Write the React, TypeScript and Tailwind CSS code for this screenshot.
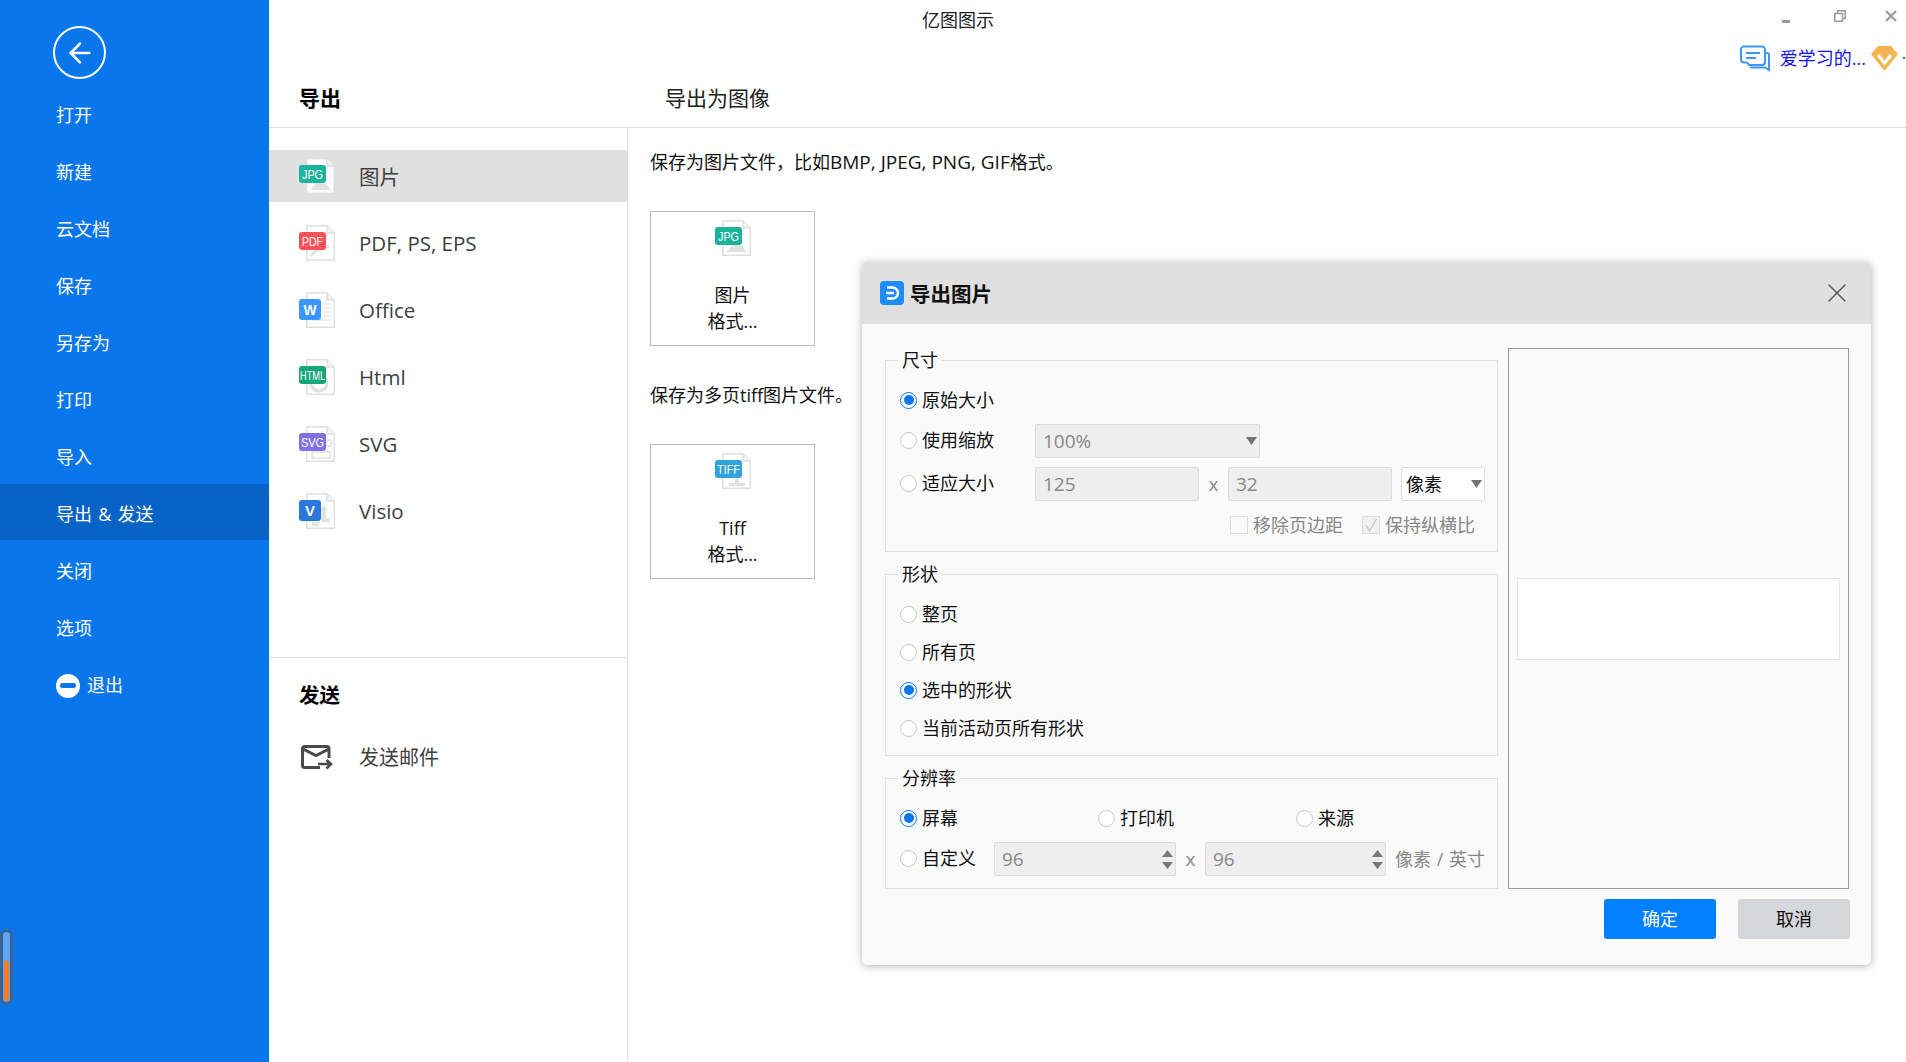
import React from 'react';
import { ArrowLeft, X } from 'lucide-react';

const sideItems = ['打开', '新建', '云文档', '保存', '另存为', '打印', '导入', '导出 & 发送', '关闭', '选项'];

type Kind = 'jpg' | 'pdf' | 'word' | 'html' | 'svg' | 'visio' | 'tiff';

const badges: Record<Kind, { label: string; color: string; width: number; textWidth: number }> = {
  jpg: { label: 'JPG', color: '#1bb39b', width: 27, textWidth: 21 },
  pdf: { label: 'PDF', color: '#fb525a', width: 27, textWidth: 21 },
  word: { label: 'W', color: '#3b97ff', width: 22, textWidth: 13 },
  html: { label: 'HTML', color: '#17a67a', width: 27, textWidth: 25 },
  svg: { label: 'SVG', color: '#8470e6', width: 27, textWidth: 23 },
  visio: { label: 'V', color: '#2b78dc', width: 22, textWidth: 10 },
  tiff: { label: 'TIFF', color: '#31a3dc', width: 27, textWidth: 23 },
};

function FileIcon({ kind }: { kind: Kind }) {
  const b = badges[kind];
  const tall = kind === 'word' || kind === 'visio';
  return (
    <svg width="36" height="36" viewBox="0 0 36 36" className="shrink-0 overflow-visible">
      <path d="M7.75 0.75H28L35.25 8V35.25H7.75Z" fill="#fff" stroke="#e0e0e0" strokeWidth="1.5" />
      <path d="M28 0.75V8H35.25" fill="#f2f2f2" stroke="#e0e0e0" strokeWidth="1.5" />
      {kind === 'jpg' && <path d="M11 32L22 20L32 32Z" fill="#e2e2e2" />}
      {kind === 'pdf' && <path d="M12 31C16 24 24 24 30 21" fill="none" stroke="#e0e0e0" strokeWidth="3" />}
      {kind === 'word' && <path d="M24 12H32M24 16H32M24 20H32M24 24H32M12 28H32" stroke="#dedede" strokeWidth="1.2" />}
      {kind === 'html' && <circle cx="20" cy="24" r="8" fill="none" stroke="#e0e0e0" strokeWidth="3" />}
      {kind === 'svg' && <path d="M13 26H31V32H13ZM27 14H32V20H27Z" fill="none" stroke="#e0e0e0" strokeWidth="1.4" />}
      {kind === 'visio' && <path d="M25 12L29 17H27V25H31V29H22V17H21ZM13 29H20V33H13Z" fill="#e2e2e2" />}
      {kind === 'tiff' && <path d="M14 30H20V26H24V30H30V33H14Z" fill="#e2e2e2" />}
      <rect x="0" y="7" width={b.width} height={tall ? 21 : 18} rx="3" fill={b.color} />
      <text
        x={b.width / 2}
        y={tall ? 22.5 : 21}
        textAnchor="middle"
        fill="#fff"
        fontSize={tall ? 15 : 13.5}
        fontWeight={tall ? 700 : 400}
        textLength={b.textWidth}
        lengthAdjust="spacingAndGlyphs"
        fontFamily="Liberation Sans, sans-serif"
      >
        {b.label}
      </text>
    </svg>
  );
}

function Radio({ on = false }: { on?: boolean }) {
  return (
    <span
      className={`flex h-[17px] w-[17px] shrink-0 items-center justify-center rounded-full border bg-white ${
        on ? 'border-[#0a76ec]' : 'border-[#c8c8c8]'
      }`}
    >
      {on && <span className="h-[10px] w-[10px] rounded-full bg-[#0a76ec]" />}
    </span>
  );
}

function RadioLabel({ text, on, className = '' }: { text: string; on?: boolean; className?: string }) {
  return (
    <div className={`flex items-center gap-[5px] ${className}`}>
      <Radio on={on} />
      <span className="text-[#111]">{text}</span>
    </div>
  );
}

function Caret() {
  return (
    <svg width="11" height="8" viewBox="0 0 11 8" className="shrink-0">
      <path d="M0 0H11L5.5 8Z" fill="#737373" />
    </svg>
  );
}

function Spin({ value, className }: { value: string; className: string }) {
  return (
    <div className={`flex h-[34px] items-center justify-between rounded-[2px] border border-[#dddddd] bg-[#eeeeee] pl-[7px] pr-[2px] text-[19px] text-[#888] ${className}`}>
      <span>{value}</span>
      <div className="flex flex-col gap-[5px]">
        <svg width="11" height="7" viewBox="0 0 11 7"><path d="M5.5 0L11 7H0Z" fill="#777" /></svg>
        <svg width="11" height="7" viewBox="0 0 11 7"><path d="M0 0H11L5.5 7Z" fill="#777" /></svg>
      </div>
    </div>
  );
}

function Group({ title, className, children }: { title: string; className: string; children: React.ReactNode }) {
  return (
    <div className={`relative border border-[#e2e2e2] pl-[14px] ${className}`}>
      <span className="absolute left-[12px] top-[-14px] bg-[#fafafa] px-[4px] leading-[26px] text-[#111]">{title}</span>
      {children}
    </div>
  );
}

function ExportDialog() {
  return (
    <div className="absolute left-[862px] top-[262px] flex h-[703px] w-[1009px] flex-col overflow-hidden rounded-[5px] bg-[#fafafa] text-[18px] shadow-[0_1px_8px_rgba(0,0,0,0.3)]">
      <div className="flex h-[62px] shrink-0 items-center bg-[#e0e0e0] pl-[18px] pr-[18px]">
        <svg width="24" height="24" viewBox="0 0 24 24">
          <rect width="24" height="24" rx="4" fill="#1f8cf5" />
          <path d="M7 6.5H12.5A5.5 5.5 0 0 1 12.5 17.5H7M6 12H14" fill="none" stroke="#fff" strokeWidth="2.4" />
        </svg>
        <span className="ml-[6px] mt-[2px] text-[20.5px] font-bold text-[#111]">导出图片</span>
        <X className="ml-auto h-[32px] w-[32px] text-[#555]" strokeWidth={1} />
      </div>
      <div className="flex flex-1 pl-[23px]">
        <div className="flex w-[613px] flex-col gap-[22px] pt-[36px]">
          <Group title="尺寸" className="h-[192px] pt-[22px]">
            <div className="flex h-[34px] items-center">
              <RadioLabel text="原始大小" on />
            </div>
            <div className="mt-[7px] flex h-[34px] items-center">
              <div className="w-[135px]"><RadioLabel text="使用缩放" className="-mt-[2px]" /></div>
              <div className="flex h-[34px] w-[225px] items-center justify-between rounded-[2px] border border-[#dddddd] bg-[#eeeeee] pl-[7px] pr-[2px] text-[19px] text-[#888]">
                <span>100%</span>
                <Caret />
              </div>
            </div>
            <div className="mt-[9px] flex h-[34px] items-center">
              <div className="w-[135px]"><RadioLabel text="适应大小" className="-mt-[2px]" /></div>
              <div className="flex h-[34px] w-[164px] items-center rounded-[2px] border border-[#dddddd] bg-[#eeeeee] pl-[7px] text-[19px] text-[#888]">125</div>
              <span className="w-[29px] text-center text-[19px] text-[#888]">x</span>
              <div className="flex h-[34px] w-[164px] items-center rounded-[2px] border border-[#dddddd] bg-[#eeeeee] pl-[7px] text-[19px] text-[#888]">32</div>
              <div className="ml-[9px] flex h-[34px] w-[84px] items-center justify-between rounded-[2px] border border-[#dddddd] bg-white pl-[4px] pr-[2px] text-[#111]">
                <span>像素</span>
                <Caret />
              </div>
            </div>
            <div className="mt-[15px] flex h-[18px] items-center pl-[330px] text-[#888]">
              <span className="h-[18px] w-[18px] shrink-0 border border-[#dddddd] bg-[#fafafa]" />
              <span className="ml-[5px] w-[109px] whitespace-nowrap">移除页边距</span>
              <span className="flex h-[18px] w-[18px] shrink-0 items-center justify-center border border-[#dddddd] bg-[#f0f0f0]">
                <svg width="14" height="14" viewBox="0 0 14 14"><path d="M2 7L5.5 13L12.5 1" fill="none" stroke="#c4c4c4" strokeWidth="1.2" /></svg>
              </span>
              <span className="ml-[5px] whitespace-nowrap">保持纵横比</span>
            </div>
          </Group>
          <Group title="形状" className="flex h-[182px] flex-col gap-[6px] pt-[23px]">
            <div className="flex h-[32px] items-center"><RadioLabel text="整页" /></div>
            <div className="flex h-[32px] items-center"><RadioLabel text="所有页" /></div>
            <div className="flex h-[32px] items-center"><RadioLabel text="选中的形状" on /></div>
            <div className="flex h-[32px] items-center"><RadioLabel text="当前活动页所有形状" /></div>
          </Group>
          <Group title="分辨率" className="h-[111px] pt-[23px]">
            <div className="flex h-[32px] items-center">
              <div className="w-[198px]"><RadioLabel text="屏幕" on /></div>
              <div className="w-[198px]"><RadioLabel text="打印机" /></div>
              <RadioLabel text="来源" />
            </div>
            <div className="mt-[8px] flex h-[34px] items-center">
              <div className="w-[94px]"><RadioLabel text="自定义" className="-mt-[2px]" /></div>
              <Spin value="96" className="w-[182px]" />
              <span className="w-[29px] text-center text-[19px] text-[#888]">x</span>
              <Spin value="96" className="w-[181px]" />
              <span className="ml-[9px] whitespace-nowrap text-[#888] [word-spacing:1px]">像素 / 英寸</span>
            </div>
          </Group>
        </div>
        <div className="ml-[10px] flex w-[341px] flex-col pt-[24px]">
          <div className="flex h-[541px] flex-col border border-[#999999] px-[8px] pt-[229px]">
            <div className="h-[82px] border border-[#e5e5e5] bg-white" />
          </div>
          <div className="-mr-[1px] mt-[10px] flex justify-end gap-[22px]">
            <button className="h-[40px] w-[112px] rounded-[3px] bg-[#0080ff] text-white">确定</button>
            <button className="h-[40px] w-[112px] rounded-[3px] bg-[#d6d7db] text-[#111]">取消</button>
          </div>
        </div>
      </div>
    </div>
  );
}

function ExportCard({ kind, lines, className = '' }: { kind: Kind; lines: string[]; className?: string }) {
  return (
    <div className={`flex h-[135px] w-[165px] flex-col items-center border border-[#bbbbbb] pt-[8px] text-[18px] leading-[26px] text-[#111] ${className}`}>
      <FileIcon kind={kind} />
      <div className="mt-[26px] text-center">
        {lines.map((line) => (
          <div key={line}>{line}</div>
        ))}
      </div>
    </div>
  );
}

const listItems: { kind: Kind; label: string }[] = [
  { kind: 'jpg', label: '图片' },
  { kind: 'pdf', label: 'PDF, PS, EPS' },
  { kind: 'word', label: 'Office' },
  { kind: 'html', label: 'Html' },
  { kind: 'svg', label: 'SVG' },
  { kind: 'visio', label: 'Visio' },
];

export default function App() {
  return (
    <div className="relative flex h-screen w-screen overflow-hidden bg-white font-['Open_Sans','Noto_Sans_CJK_SC',sans-serif]">
      <aside className="relative flex w-[269px] shrink-0 flex-col bg-[#0a76ec] pt-[26px] text-[18px] text-white">
        <div className="ml-[53px] flex h-[53px] w-[53px] items-center justify-center rounded-full border-2 border-white">
          <ArrowLeft className="h-[32px] w-[32px]" strokeWidth={2} />
        </div>
        <nav className="mt-[8px] flex flex-col">
          {sideItems.map((item) => (
            <div
              key={item}
              className={
                item === '导出 & 发送'
                  ? 'relative -mt-[2px] mb-[3px] flex h-[56px] items-center bg-[#0763c6] pl-[56px] pt-[4px] [word-spacing:1.5px]'
                  : 'flex h-[57px] items-center pl-[56px]'
              }
            >
              {item}
            </div>
          ))}
          <div className="flex h-[57px] items-center pl-[56px]">
            <span className="flex h-[24px] w-[24px] items-center justify-center rounded-full bg-white">
              <span className="h-[5px] w-[16px] rounded-full bg-[#0a76ec]" />
            </span>
            <span className="ml-[7px]">退出</span>
          </div>
        </nav>
        <div className="absolute left-0 top-[929px] h-[76px] w-[13px] overflow-hidden rounded-full border-[3px] border-[#3a6491] bg-[#5ea6f3]">
          <div className="absolute bottom-[1px] left-[1px] h-[40px] w-[5px] rounded-b-full bg-[#ff7a20]" />
        </div>
      </aside>

      <main className="flex min-w-0 flex-1 flex-col">
        <header className="flex h-[128px] shrink-0 flex-col border-b border-[#e0e0e0]">
          <div className="flex h-[40px] items-center">
            <span className="ml-[653px] text-[18px] text-[#222]">亿图图示</span>
            <div className="ml-auto flex items-center pr-[9px]">
              <span className="mt-[2px] h-[3px] w-[8px] bg-[#999]" />
              <svg width="12" height="12" viewBox="0 0 12 12" className="ml-[44px] mt-[-8px]">
                <path d="M3.5 3V.75H11.25V8.5H9M.75 3.5H8.5V11.25H.75Z" fill="none" stroke="#999" strokeWidth="1.5" />
              </svg>
              <svg width="12" height="12" viewBox="0 0 12 12" className="ml-[39px] mt-[-8px]">
                <path d="M1 1L11 11M11 1L1 11" fill="none" stroke="#999" strokeWidth="2" />
              </svg>
            </div>
          </div>
          <div className="flex h-[36px] items-center justify-end">
            <svg width="30" height="27" viewBox="0 0 30 27">
              <path d="M4 1.500H22A3 3 0 0 1 25 4.500V17A3 3 0 0 1 22 20H9L7 17.500H4A3 3 0 0 1 1 14.500V4.500A3 3 0 0 1 4 1.500Z" fill="none" stroke="#3f97f2" strokeWidth="2" />
              <path d="M6 8H20M6 13H16" stroke="#3f97f2" strokeWidth="2" />
              <path d="M25 8H27A2 2 0 0 1 29 10V25L25 22.500H10" fill="none" stroke="#3f97f2" strokeWidth="2" />
            </svg>
            <span className="ml-[10px] text-[18px] text-[#1313f0]">爱学习的...</span>
            <svg width="27" height="25" viewBox="0 0 27 25" className="ml-[5px]">
              <path d="M7 0H20L27 8L13.500 25L0 8Z" fill="#f5b450" />
              <path d="M7 9L13.500 17L20 9" fill="none" stroke="#fff" strokeWidth="3" />
            </svg>
            <span className="ml-[5px] mr-[1px] h-[2px] w-[2px] bg-[#3f6fb0]" />
          </div>
          <div className="flex h-[48px] items-center pb-[2px]">
            <span className="ml-[30px] text-[21px] font-bold text-black">导出</span>
            <span className="ml-[324px] text-[21px] text-[#222]">导出为图像</span>
          </div>
        </header>

        <div className="flex min-h-0 flex-1">
          <section className="flex w-[359px] shrink-0 flex-col border-r border-[#e0e0e0] pt-[22px] text-[20.5px] text-[#404040]">
            <div className="flex flex-col gap-[15px]">
              {listItems.map((it, i) => (
                <div key={it.kind} className={`flex h-[52px] items-center pl-[30px] ${i === 0 ? 'bg-[#e0e0e0]' : ''}`}>
                  <FileIcon kind={it.kind} />
                  <span className={`ml-[24px] ${i === 0 ? 'mt-[2px]' : ''}`}>{it.label}</span>
                </div>
              ))}
            </div>
            <div className="mt-[120px] border-t border-[#e0e0e0] pt-[24px]">
              <div className="pl-[30px] text-[20.5px] font-bold leading-[26px] text-black">发送</div>
              <div className="mt-[36px] flex h-[26px] items-center pl-[32px]">
                <svg width="32" height="25" viewBox="0 0 32 25" className="shrink-0">
                  <path d="M19 22.500H3.500A2 2 0 0 1 1.500 20.500V3.500A2 2 0 0 1 3.500 1.500H26A2 2 0 0 1 28 3.500V13" fill="none" stroke="#4a4a4a" strokeWidth="3" />
                  <path d="M2 4L15 10.500L28 4" fill="none" stroke="#4a4a4a" strokeWidth="3" />
                  <path d="M17 19H29M25.500 15L30 19L25.500 23.500" fill="none" stroke="#4a4a4a" strokeWidth="2.6" />
                </svg>
                <span className="ml-[26px] mt-[2px] text-[20px]">发送邮件</span>
              </div>
            </div>
          </section>

          <section className="flex flex-1 flex-col pl-[22px] pt-[21px] text-[18px] leading-[26px] text-[#111]">
            <p>保存为图片文件，比如<span className="text-[19px]">BMP, JPEG, PNG, GIF</span>格式。</p>
            <ExportCard kind="jpg" lines={['图片', '格式...']} className="mt-[36px]" />
            <p className="mt-[36px]">保存为多页tiff图片文件。</p>
            <ExportCard kind="tiff" lines={['Tiff', '格式...']} className="mt-[36px]" />
          </section>
        </div>
      </main>

      <ExportDialog />
    </div>
  );
}
